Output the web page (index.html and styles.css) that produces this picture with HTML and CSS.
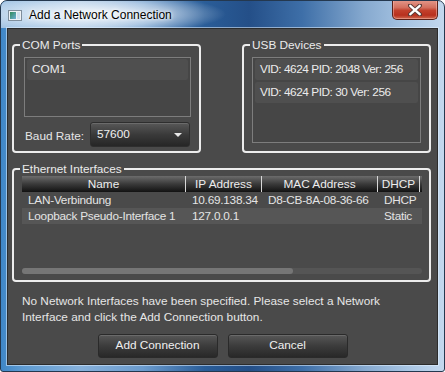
FILE: index.html
```html
<!DOCTYPE html>
<html>
<head>
<meta charset="utf-8">
<link rel="stylesheet" href="styles.css">
</head>
<body>
<div class="window">
  <div class="titlebar">
    <svg class="app-icon" width="14" height="11" viewBox="0 0 14 11">
      <defs>
        <linearGradient id="ig" x1="0" y1="0" x2="1" y2="1">
          <stop offset="0" stop-color="#2f8a5a"/>
          <stop offset="1" stop-color="#6fb0d8"/>
        </linearGradient>
      </defs>
      <rect x="0.5" y="0.5" width="13" height="10" fill="#eef2f6" stroke="#7f8e9c"/>
      <rect x="2" y="2" width="6" height="7" fill="url(#ig)"/>
      <rect x="9" y="2" width="3" height="7" fill="#cfe0ee"/>
    </svg>
    <span class="title">Add a Network Connection</span>
    <div class="close">
      <svg width="14" height="12" viewBox="0 0 14 12">
        <path d="M2 1.5 L12 10.5 M12 1.5 L2 10.5" stroke="#5a3a36" stroke-width="4.2" stroke-linecap="round"/>
        <path d="M2.3 1.8 L11.7 10.2 M11.7 1.8 L2.3 10.2" stroke="#ffffff" stroke-width="2.4" stroke-linecap="round"/>
      </svg>
    </div>
  </div>
  <div class="client">
    <div class="top-row">
      <fieldset class="group">
        <legend>COM Ports</legend>
        <div class="gbody com-body">
          <div class="listbox com-list">
            <div class="item">COM1</div>
          </div>
          <div class="baud">
            <span class="baud-label">Baud Rate:</span>
            <div class="combo">
              <span>57600</span>
              <span class="arrow"></span>
            </div>
          </div>
        </div>
      </fieldset>
      <fieldset class="group">
        <legend>USB Devices</legend>
        <div class="gbody usb-body">
          <div class="listbox usb-list">
            <div class="item tight">VID: 4624 PID: 2048 Ver: 256</div>
            <div class="item tight">VID: 4624 PID: 30 Ver: 256</div>
          </div>
        </div>
      </fieldset>
    </div>
    <fieldset class="group eth">
      <legend>Ethernet Interfaces</legend>
      <div class="gbody eth-body">
        <div class="grid">
          <div class="row head">
            <div class="cell">Name</div>
            <div class="cell">IP Address</div>
            <div class="cell">MAC Address</div>
            <div class="cell">DHCP</div>
            <div class="cell filler"></div>
          </div>
          <div class="row">
            <div class="cell">LAN-Verbindung</div>
            <div class="cell">10.69.138.34</div>
            <div class="cell">D8-CB-8A-08-36-66</div>
            <div class="cell">DHCP</div>
            <div class="cell"></div>
          </div>
          <div class="row alt">
            <div class="cell">Loopback Pseudo-Interface 1</div>
            <div class="cell">127.0.0.1</div>
            <div class="cell"></div>
            <div class="cell">Static</div>
            <div class="cell"></div>
          </div>
          <div class="spacer"></div>
          <div class="hscroll"><div class="thumb"></div></div>
        </div>
      </div>
    </fieldset>
    <p class="msg">No Network Interfaces have been specified. Please select a Network<br>Interface and click the Add Connection button.</p>
    <div class="buttons">
      <div class="btn">Add Connection</div>
      <div class="btn">Cancel</div>
    </div>
  </div>
</div>
</body>
</html>
```

FILE: styles.css
```css
html, body {
  margin: 0;
  padding: 0;
  background: #ffffff;
}

body {
  font-family: "Liberation Sans", Arial, sans-serif;
  font-size: 12px;
}

.window {
  width: 445px;
  height: 372px;
  box-sizing: border-box;
  border: 1px solid #24384f;
  border-radius: 7px 7px 3px 3px;
  overflow: hidden;
  display: flex;
  flex-direction: column;
  background: linear-gradient(90deg, #3f86c6 0%, #5e9bd2 5%, #86b0da 18%, #6b9bcd 32%, #2a5d98 46%, #244f88 56%, #3e6fa8 68%, #86a9cf 82%, #a9c6e4 92%, #c3d8ee 100%);
}

.titlebar {
  height: 27px;
  flex: none;
  display: flex;
  align-items: flex-start;
  padding: 0 6px 0 7px;
  background: radial-gradient(ellipse 130px 20px at 95px 13px, rgba(255,255,255,0.9), rgba(255,255,255,0.45) 60%, rgba(255,255,255,0) 100%),
              linear-gradient(90deg, rgba(205,222,240,0.7), rgba(205,222,240,0) 32%);
}

.app-icon {
  margin-top: 9px;
  flex: none;
}

.title {
  margin-left: 7px;
  margin-top: 7px;
  line-height: 14px;
  color: #000;
  text-shadow: 0 0 6px #ffffff, 0 0 3px #ffffff;
}

.close {
  margin-left: auto;
  margin-top: -1px;
  width: 46px;
  height: 20px;
  box-sizing: border-box;
  border: 1px solid #5b2119;
  border-top: none;
  border-radius: 0 0 5px 5px;
  background: linear-gradient(#e49a8c 0%, #d36f5e 40%, #c2402c 55%, #b8301e 80%, #cf6a50 100%);
  box-shadow: inset 0 0 0 1px rgba(255, 200, 190, 0.45);
  display: flex;
  align-items: center;
  justify-content: center;
}

.client {
  margin: 0 6px;
  height: 337px;
  box-sizing: border-box;
  border: 1px solid #2c2c2c;
  box-shadow: 0 0 0 1px rgba(225, 240, 255, 0.55);
  background: #4a4a4a;
  padding: 9px 6px 0 4px;
  display: flex;
  flex-direction: column;
  color: #e6e6e6;
  font-size: 11.8px;
}

.top-row {
  display: grid;
  grid-template-columns: 189px 189px;
  column-gap: 41px;
}

.group {
  margin: 0;
  padding: 0;
  min-width: 0;
  border: 2px solid #ececec;
  border-radius: 4px;
}

.group legend {
  margin-left: 6px;
  padding: 0 2px;
  line-height: 14px;
  color: #eaeaea;
}

.gbody {
  display: flex;
  flex-direction: column;
}

.com-body {
  padding: 5px 8px 4px 10px;
}

.usb-body {
  padding: 5px 8px 8px 8px;
}

.listbox {
  box-sizing: border-box;
  border: 1px solid #7d7d7d;
  background: #464646;
  padding: 1px 2px;
  display: flex;
  flex-direction: column;
  gap: 2px;
}

.com-list {
  height: 60px;
}

.usb-list {
  height: 86px;
}

.item {
  height: 21px;
  line-height: 21px;
  background: #4f4f4f;
  border-radius: 2px;
  padding-left: 5px;
  color: #ececec;
  white-space: nowrap;
  overflow: hidden;
}

.item.tight {
  letter-spacing: -0.45px;
}

.baud {
  margin-top: 5px;
  display: flex;
  align-items: center;
  height: 25px;
}

.baud-label {
  width: 65px;
  padding-left: 1px;
  margin-top: 3px;
}

.combo {
  width: 100px;
  height: 25px;
  box-sizing: border-box;
  border: 1px solid #2e2e2e;
  border-radius: 3px;
  background: linear-gradient(#585858, #3a3a3a 50%, #262626);
  box-shadow: inset 0 1px 0 rgba(255,255,255,0.12);
  display: flex;
  align-items: center;
  padding: 0 6px 0 6px;
  color: #f0f0f0;
}

.combo span:first-child {
  flex: 1;
  margin-top: -2px;
}

.arrow {
  width: 0;
  height: 0;
  border-left: 4px solid transparent;
  border-right: 4px solid transparent;
  border-top: 4px solid #e8e8e8;
  margin-right: 1px;
}

.eth {
  margin-top: 9px;
}

.eth-body {
  padding: 0 7px 2px 8px;
}

.grid {
  height: 102px;
  display: flex;
  flex-direction: column;
}

.row {
  display: grid;
  grid-template-columns: 164px 76px 116px 42px 1fr;
  height: 16px;
  line-height: 16px;
  color: #e4e4e4;
}

.row .cell {
  padding-left: 6px;
  white-space: nowrap;
  overflow: hidden;
  letter-spacing: -0.25px;
}

.row.head {
  background: linear-gradient(#6c6c6c, #3a3a3a 50%, #121212);
}

.row.head .cell {
  padding-left: 0;
  text-align: center;
  border-right: 1px solid #d8d8d8;
  color: #ededed;
  letter-spacing: 0;
}

.row.head .cell.filler {
  border-right: none;
}

.row.alt {
  background: #565656;
}

.spacer {
  flex: 1;
}

.hscroll {
  height: 6px;
  border-radius: 3px;
  background: #555555;
  margin-bottom: 4px;
}

.thumb {
  width: 271px;
  height: 6px;
  border-radius: 3px;
  background: #767676;
}

.msg {
  margin: 11px 0 0 10px;
  line-height: 16px;
  color: #e6e6e6;
}

.buttons {
  margin-top: 9px;
  display: flex;
  justify-content: center;
  gap: 10px;
  padding-left: 2px;
}

.btn {
  width: 120px;
  height: 24px;
  box-sizing: border-box;
  border: 1px solid #2a2a2a;
  border-radius: 3px;
  background: linear-gradient(#575757, #3c3c3c 50%, #282828);
  box-shadow: inset 0 1px 0 rgba(255,255,255,0.12);
  color: #f0f0f0;
  text-align: center;
  line-height: 21px;
}
```
